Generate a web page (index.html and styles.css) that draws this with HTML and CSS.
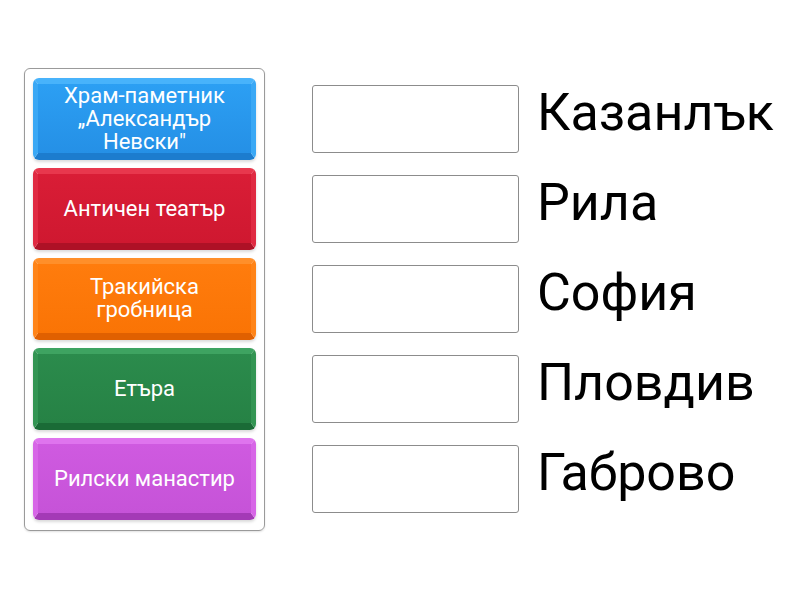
FILE: index.html
```html
<!DOCTYPE html>
<html lang="bg">
<head>
<meta charset="utf-8">
<link rel="stylesheet" href="styles.css">
</head>
<body>
<div class="page">
  <div class="bank">
    <div class="tile blue">Храм-паметник „Александър Невски"</div>
    <div class="tile red">Античен театър</div>
    <div class="tile orange">Тракийска гробница</div>
    <div class="tile green">Етъра</div>
    <div class="tile purple">Рилски манастир</div>
  </div>
  <div class="targets">
    <div class="row"><div class="slot"></div><div class="label">Казанлък</div></div>
    <div class="row"><div class="slot"></div><div class="label">Рила</div></div>
    <div class="row"><div class="slot"></div><div class="label">София</div></div>
    <div class="row"><div class="slot"></div><div class="label">Пловдив</div></div>
    <div class="row"><div class="slot"></div><div class="label">Габрово</div></div>
  </div>
</div>
</body>
</html>
```
FILE: styles.css
```css
html, body {
  margin: 0;
  padding: 0;
  background: #ffffff;
  width: 800px;
  height: 600px;
  overflow: hidden;
}
body {
  font-family: Roboto, "Liberation Sans", Arial, sans-serif;
}
.page {
  display: flex;
  align-items: flex-start;
  padding: 68px 0 0 24px;
}
.bank {
  width: 223px;
  border: 1px solid #9a9a9a;
  border-radius: 6px;
  padding: 9px 8px 10px 8px;
  display: flex;
  flex-direction: column;
  gap: 8px;
  box-shadow: 0 1px 2px rgba(0,0,0,0.12);
}
.tile {
  box-sizing: border-box;
  height: 82px;
  border-radius: 6px;
  border-style: solid;
  border-width: 6px 5px 7px 5px;
  color: #fff;
  font-size: 22px;
  line-height: 23px;
  text-align: center;
  display: flex;
  align-items: center;
  justify-content: center;
  padding: 0 8px 1px 8px;
  box-shadow: 0 2px 3px rgba(0,0,0,0.15);
}
.blue {
  background: linear-gradient(#2c9ff3, #2590e6);
  border-color: #48b3fb #3aa8f5 #1c7cce #3aa8f5;
}
.red {
  background: linear-gradient(#d91d36, #cf1830);
  border-color: #e8374d #e02a42 #ae1126 #e02a42;
}
.orange {
  background: linear-gradient(#ff7c0d, #fa7405);
  border-color: #ff8f2a #ff8418 #e06000 #ff8418;
}
.green {
  background: linear-gradient(#2b8b4c, #268245);
  border-color: #3ea361 #339553 #1a6b36 #339553;
}
.purple {
  background: linear-gradient(#cf5ae0, #c653d8);
  border-color: #df74ee #d766e7 #a43ab6 #d766e7;
}
.targets {
  margin-left: 47px;
  padding-top: 17px;
  display: flex;
  flex-direction: column;
  gap: 22px;
}
.row {
  display: flex;
  align-items: center;
  height: 68px;
}
.slot {
  box-sizing: border-box;
  width: 207px;
  height: 68px;
  border: 1px solid #8c8c8c;
  border-radius: 3px;
  background: #fff;
}
.label {
  margin-left: 18px;
  font-size: 52px;
  color: #000;
  white-space: nowrap;
  padding-bottom: 14px;
}
```
